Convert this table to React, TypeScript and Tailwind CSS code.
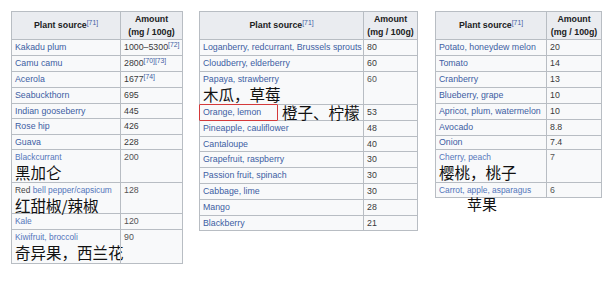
import type { ReactNode } from "react";

interface Row {
  name: ReactNode;
  amount: ReactNode;
  h?: number;
}

interface TableProps {
  c1: number;
  c2: number;
  rows: Row[];
}

const LINK = "text-[#3d5ea3]";
const CJK = "font-['Noto_Sans_CJK_SC',sans-serif] text-[15.5px] leading-none text-[#111] whitespace-nowrap";

function Ref({ children }: { children: ReactNode }) {
  return <sup className={`${LINK} text-[6.8px] font-normal leading-none`}>{children}</sup>;
}

function Link({ children }: { children: ReactNode }) {
  return <span className={LINK}>{children}</span>;
}

function Note({ children }: { children: ReactNode }) {
  return <span className="text-[#5476bb] text-[8.4px]">{children}</span>;
}

function Header({ c1, c2 }: { c1: number; c2: number }) {
  return (
    <div className="flex h-[27px] bg-[#eaecf0] text-[8.8px] font-bold text-[#202122]">
      <div style={{ width: c1 }} className="flex items-center justify-center">
        <span>
          Plant source<Ref>[71]</Ref>
        </span>
      </div>
      <div
        style={{ width: c2 }}
        className="flex flex-col items-center justify-center border-l border-[#b8bdc3] leading-[13px]"
      >
        <span>Amount</span>
        <span>(mg / 100g)</span>
      </div>
    </div>
  );
}

function Table({ c1, c2, rows }: TableProps) {
  return (
    <div className="border border-[#b8bdc3] bg-[#f8f9fa] text-[8.8px] leading-none font-['Liberation_Sans',sans-serif]">
      <Header c1={c1} c2={c2} />
      {rows.map((r, i) => (
        <div
          key={i}
          className="flex border-t border-[#b8bdc3]"
          style={{ height: r.h ?? 16 }}
        >
          <div style={{ width: c1 }} className="shrink-0 px-[3px] whitespace-nowrap">
            {r.name}
          </div>
          <div
            style={{ width: c2 }}
            className="shrink-0 border-l border-[#b8bdc3] px-[3px] whitespace-nowrap text-[#3a3a3a]"
          >
            {r.amount}
          </div>
        </div>
      ))}
    </div>
  );
}

function Plain({ children }: { children: ReactNode }) {
  return <div className="flex h-full items-center">{children}</div>;
}

function L(t: string): ReactNode {
  return (
    <Plain>
      <Link>{t}</Link>
    </Plain>
  );
}

function N(t: ReactNode): ReactNode {
  return <Plain>{t}</Plain>;
}

function Tall({ en, zh }: { en: ReactNode; zh: string }) {
  return (
    <div className="flex flex-col pt-[3px] gap-[3px]">
      <div>{en}</div>
      <div className={CJK}>{zh}</div>
    </div>
  );
}

function TopNum({ children }: { children: ReactNode }) {
  return <div className="pt-[3px] text-[#555]">{children}</div>;
}

const t1: Row[] = [
  { name: L("Kakadu plum"), amount: N(<span>1000–5300<Ref>[72]</Ref></span>) },
  { name: L("Camu camu"), amount: N(<span>2800<Ref>[70][73]</Ref></span>) },
  { name: L("Acerola"), amount: N(<span>1677<Ref>[74]</Ref></span>) },
  { name: L("Seabuckthorn"), amount: N("695") },
  { name: L("Indian gooseberry"), amount: N("445"), h: 15 },
  { name: L("Rose hip"), amount: N("426") },
  { name: L("Guava"), amount: N("228"), h: 15 },
  {
    name: <Tall en={<Note>Blackcurrant</Note>} zh="黑加仑" />,
    amount: <TopNum>200</TopNum>,
    h: 33,
  },
  {
    name: (
      <Tall
        en={
          <span className="text-[8.4px] text-[#444]">
            Red <span className="text-[#5476bb]">bell pepper/capsicum</span>
          </span>
        }
        zh="红甜椒/辣椒"
      />
    ),
    amount: <TopNum>128</TopNum>,
    h: 31,
  },
  { name: N(<Note>Kale</Note>), amount: N(<span className="text-[#555]">120</span>) },
  {
    name: <Tall en={<Note>Kiwifruit, broccoli</Note>} zh="奇异果，西兰花" />,
    amount: <TopNum>90</TopNum>,
    h: 34,
  },
];

const t2: Row[] = [
  { name: L("Loganberry, redcurrant, Brussels sprouts"), amount: N("80") },
  { name: L("Cloudberry, elderberry"), amount: N("60") },
  {
    name: <Tall en={<Link>Papaya, strawberry</Link>} zh="木瓜，草莓" />,
    amount: <TopNum>60</TopNum>,
    h: 33,
  },
  {
    name: (
      <div className="flex h-full items-center">
        <span className="-ml-[4px] flex h-[17px] w-[79px] shrink-0 items-center rounded-[1px] border-[1.5px] border-[#d4393a] pl-[3px]">
          <Link>Orange, lemon</Link>
        </span>
        <span className={`${CJK} ml-[4px]`}>橙子、柠檬</span>
      </div>
    ),
    amount: N("53"),
  },
  { name: L("Pineapple, cauliflower"), amount: N("48") },
  { name: L("Cantaloupe"), amount: N("40"), h: 15 },
  { name: L("Grapefruit, raspberry"), amount: N("30") },
  { name: L("Passion fruit, spinach"), amount: N("30") },
  { name: L("Cabbage, lime"), amount: N("30") },
  { name: L("Mango"), amount: N("28") },
  { name: L("Blackberry"), amount: N("21"), h: 15 },
];

const t3: Row[] = [
  { name: L("Potato, honeydew melon"), amount: N("20") },
  { name: L("Tomato"), amount: N("14") },
  { name: L("Cranberry"), amount: N("13") },
  { name: L("Blueberry, grape"), amount: N("10") },
  { name: L("Apricot, plum, watermelon"), amount: N("10") },
  { name: L("Avocado"), amount: N("8.8") },
  { name: L("Onion"), amount: N("7.4"), h: 14 },
  {
    name: <Tall en={<Note>Cherry, peach</Note>} zh="樱桃，桃子" />,
    amount: <TopNum>7</TopNum>,
    h: 33,
  },
  {
    name: N(<Note>Carrot, apple, asparagus</Note>),
    amount: N(<span className="text-[#555]">6</span>),
    h: 15,
  },
];

export default function App() {
  return (
    <div className="h-[282px] w-[611px] overflow-hidden bg-white">
      <div className="flex items-start pl-[11px] pt-[11px]">
        <Table c1={108} c2={62} rows={t1} />
        <div className="ml-[16px]">
          <Table c1={163} c2={54} rows={t2} />
        </div>
        <div className="ml-[17px]">
          <Table c1={110} c2={55} rows={t3} />
          <div className={`${CJK} -mt-[2px] pl-[32px] text-[15px]`}>苹果</div>
        </div>
      </div>
    </div>
  );
}
